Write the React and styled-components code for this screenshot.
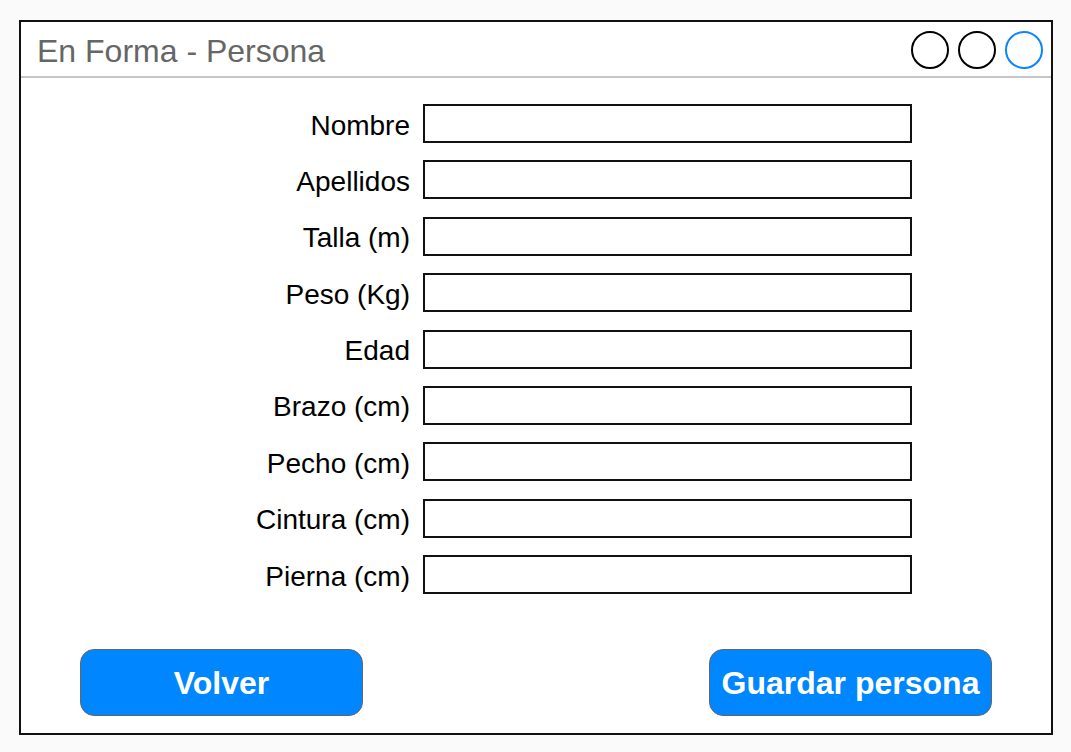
import React from 'react';
import styled, { createGlobalStyle } from 'styled-components';

const GlobalStyle = createGlobalStyle`
  html, body {
    margin: 0;
    padding: 0;
    background: #fafafa;
    font-family: "Liberation Sans", Arial, sans-serif;
  }
`;

const Page = styled.div`
  width: 1071px;
  height: 752px;
  padding: 20px 18px 17px 19px;
  box-sizing: border-box;
`;

const Window = styled.div`
  width: 1034px;
  height: 715px;
  box-sizing: border-box;
  border: 2px solid #111;
  background: #fff;
  display: flex;
  flex-direction: column;
`;

const TitleBar = styled.div`
  height: 56px;
  box-sizing: border-box;
  border-bottom: 2px solid #c6c6c6;
  display: flex;
  align-items: center;
  justify-content: space-between;
  padding: 0 8px 0 16px;
`;

const Title = styled.div`
  font-size: 32px;
  color: #666;
  padding-top: 4px;
`;

const Dots = styled.div`
  display: flex;
  gap: 9px;
  padding-top: 1px;
`;

const Dot = styled.span`
  width: 38px;
  height: 38px;
  box-sizing: border-box;
  border-radius: 50%;
  border: 2px solid ${p => (p.$active ? '#0a84ff' : '#000')};
`;

const Form = styled.div`
  display: grid;
  grid-template-columns: 200px 489px;
  column-gap: 13px;
  row-gap: 17.4px;
  padding: 26px 0 0 189px;
  align-items: center;
`;

const Label = styled.label`
  font-size: 28px;
  color: #000;
  text-align: right;
  white-space: nowrap;
  padding-top: 4px;
`;

const Input = styled.input`
  height: 39px;
  box-sizing: border-box;
  border: 2px solid #111;
  background: #fff;
  margin: 0;
  padding: 0 8px;
  font: inherit;
  font-size: 20px;
  outline: none;
`;

const Actions = styled.div`
  margin-top: auto;
  display: flex;
  justify-content: space-between;
  padding: 0 59px 17px 59px;
`;

const Button = styled.button`
  width: 283px;
  height: 67px;
  box-sizing: border-box;
  border: 1.5px solid #666;
  border-radius: 14px;
  background: #0087ff;
  color: #fff;
  font-family: "Liberation Sans", Arial, sans-serif;
  font-weight: bold;
  font-size: 32px;
  padding: 2px 0 0;
  cursor: pointer;
`;

const fields = [
  'Nombre',
  'Apellidos',
  'Talla (m)',
  'Peso (Kg)',
  'Edad',
  'Brazo (cm)',
  'Pecho (cm)',
  'Cintura (cm)',
  'Pierna (cm)',
];

export default function App() {
  return (
    <Page>
      <GlobalStyle />
      <Window>
        <TitleBar>
          <Title>En Forma - Persona</Title>
          <Dots>
            <Dot />
            <Dot />
            <Dot $active />
          </Dots>
        </TitleBar>
        <Form>
          {fields.map(f => (
            <React.Fragment key={f}>
              <Label>{f}</Label>
              <Input type="text" />
            </React.Fragment>
          ))}
        </Form>
        <Actions>
          <Button>Volver</Button>
          <Button>Guardar persona</Button>
        </Actions>
      </Window>
    </Page>
  );
}
